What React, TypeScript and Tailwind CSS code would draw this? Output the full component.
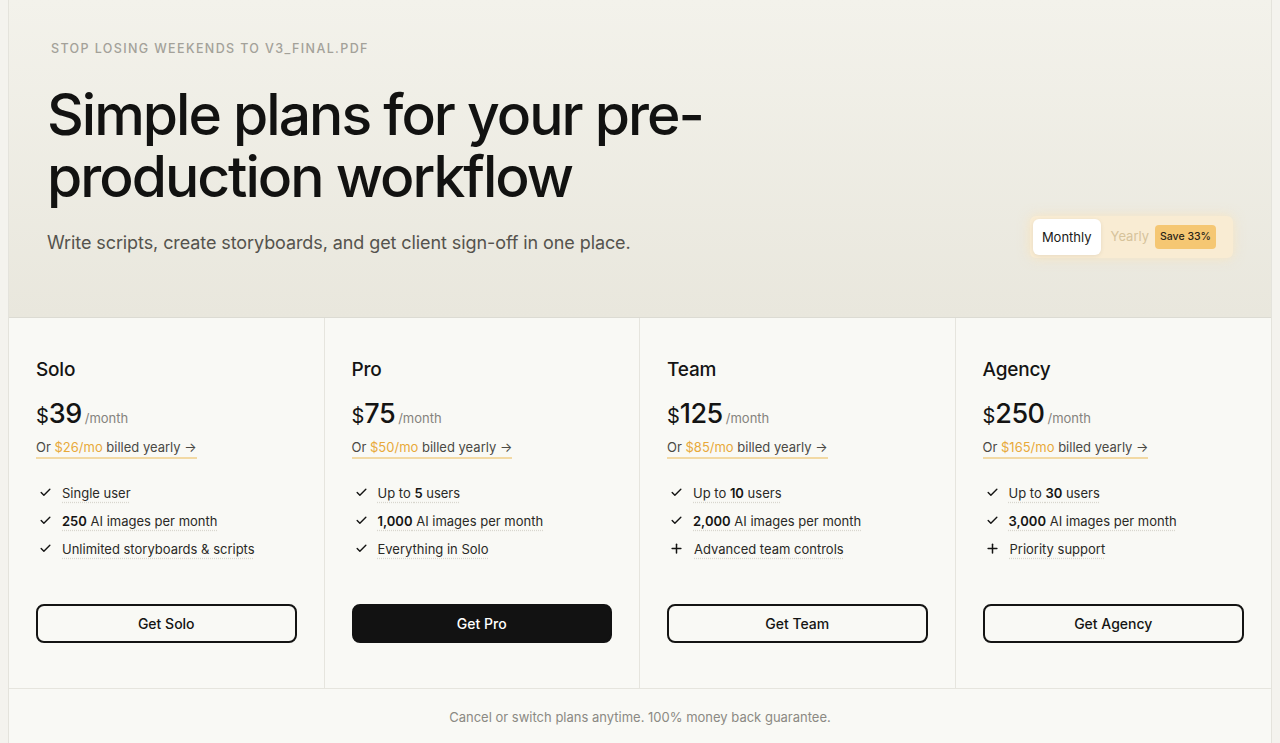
import { Check, Plus } from "lucide-react";

type Plan = {
  name: string;
  price: string;
  yearly: string;
  features: { icon: "check" | "plus"; bold?: string; pre?: string; text: string }[];
  cta: string;
  primary?: boolean;
};

const plans: Plan[] = [
  {
    name: "Solo",
    price: "39",
    yearly: "$26/mo",
    features: [
      { icon: "check", text: "Single user" },
      { icon: "check", bold: "250", text: " AI images per month" },
      { icon: "check", text: "Unlimited storyboards & scripts" },
    ],
    cta: "Get Solo",
  },
  {
    name: "Pro",
    price: "75",
    yearly: "$50/mo",
    features: [
      { icon: "check", pre: "Up to ", bold: "5", text: " users" },
      { icon: "check", bold: "1,000", text: " AI images per month" },
      { icon: "check", text: "Everything in Solo" },
    ],
    cta: "Get Pro",
    primary: true,
  },
  {
    name: "Team",
    price: "125",
    yearly: "$85/mo",
    features: [
      { icon: "check", pre: "Up to ", bold: "10", text: " users" },
      { icon: "check", bold: "2,000", text: " AI images per month" },
      { icon: "plus", text: "Advanced team controls" },
    ],
    cta: "Get Team",
  },
  {
    name: "Agency",
    price: "250",
    yearly: "$165/mo",
    features: [
      { icon: "check", pre: "Up to ", bold: "30", text: " users" },
      { icon: "check", bold: "3,000", text: " AI images per month" },
      { icon: "plus", text: "Priority support" },
    ],
    cta: "Get Agency",
  },
];

const PlanCard = ({ plan, last }: { plan: Plan; last: boolean }) => {
  return (
    <div className={`flex flex-col px-[27px] pt-[40px] pb-[45px] ${last ? "" : "border-r border-[#e6e5de]"}`}>
      <h3 className="text-[19px] font-medium leading-[24px] text-[#141413] tracking-[-0.01em]">{plan.name}</h3>
      <div className="mt-[18px] flex items-baseline text-[#141413]">
        <span className="text-[20px] leading-none">$</span>
        <span className="text-[27px] font-medium leading-none tracking-[-0.02em]">{plan.price}</span>
        <span className="ml-[3px] text-[13px] text-[#85837d]">/month</span>
      </div>
      <div className="mt-[5px]">
        <a className="inline-block border-b-2 border-[#f2d9a4] pb-[1px] text-[13px] leading-[18px] text-[#4a4944]">
          Or <span className="text-[#e8a93a]">{plan.yearly}</span> billed yearly →
        </a>
      </div>
      <ul className="mt-[25px] flex flex-col gap-[10px]">
        {plan.features.map((f, i) => (
          <li key={i} className="flex items-center gap-[10px] text-[13px] leading-[18px] text-[#2a2926]">
            {f.icon === "check" ? (
              <Check className="ml-[3px] h-[13px] w-[13px] text-[#141413]" strokeWidth={2.6} />
            ) : (
              <Plus className="ml-[2px] h-[15px] w-[15px] text-[#141413]" strokeWidth={2.4} />
            )}
            <span className="underline decoration-dotted decoration-[#d8d6ce] underline-offset-[4px]">
              {f.pre}
              {f.bold && <span className="font-semibold text-[#141413]">{f.bold}</span>}
              {f.text}
            </span>
          </li>
        ))}
      </ul>
      <button
        className={`mt-[46px] h-[39px] w-full rounded-[8px] border-2 text-[14px] font-medium ${
          plan.primary ? "border-[#121212] bg-[#121212] text-white" : "border-[#141413] bg-transparent text-[#141413]"
        }`}
      >
        {plan.cta}
      </button>
    </div>
  );
};

export default function App() {
  return (
    <div className="min-h-[743px] bg-[#f4f3ee] px-[8px] font-['Inter',sans-serif] antialiased">
      <div className="min-h-[743px] border-x border-[#e4e3dc] bg-[#f9f9f5]">
        <header className="h-[318px] border-b border-[#dcdbd3] bg-gradient-to-b from-[#f3f2eb] to-[#e9e7dd] px-[38px] pt-[40px]">
          <p className="ml-[4px] text-[12.5px] font-medium tracking-[0.11em] text-[#a3a199]">
            STOP LOSING WEEKENDS TO V3_FINAL.PDF
          </p>
          <h1 className="mt-[25px] text-[57px] font-medium leading-[62px] tracking-[-0.035em] text-[#121211]">
            Simple plans for your pre-
            <br />
            production workflow
          </h1>
          <div className="mt-[12px] flex items-center justify-between">
            <p className="mt-[8px] text-[18px] text-[#55534d] tracking-[-0.005em]">
              Write scripts, create storyboards, and get client sign-off in one place.
            </p>
            <div className="-mt-[4px] flex items-center rounded-[6px] bg-[#fcecd0]/80 p-[3px] shadow-[0_0_12px_rgba(252,226,180,0.7)]">
              <button className="rounded-[6px] bg-white px-[9px] py-[9px] text-[13px] leading-[18px] text-[#1a1a18] shadow-[0_1px_4px_rgba(0,0,0,0.08)]">
                Monthly
              </button>
              <span className="ml-[10px] text-[13px] text-[#d6c39b]">Yearly</span>
              <span className="ml-[6px] mr-[14px] rounded-[4px] bg-[#f5c773] px-[5px] py-[4px] text-[10.5px] font-medium text-[#2a2418]">
                Save 33%
              </span>
            </div>
          </div>
        </header>
        <div className="grid grid-cols-4 border-b border-[#e6e5de]">
          {plans.map((p, i) => (
            <PlanCard key={p.name} plan={p} last={i === plans.length - 1} />
          ))}
        </div>
        <p className="pt-[19px] text-center text-[13px] text-[#8b8983]">
          Cancel or switch plans anytime. 100% money back guarantee.
        </p>
      </div>
    </div>
  );
}
